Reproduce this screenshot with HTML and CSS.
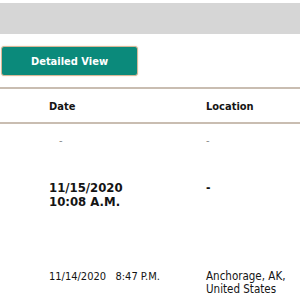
FILE: index.html
```html
<!DOCTYPE html>
<html lang="en">
<head>
    <meta charset="UTF-8">
    <title>Tracking</title>
    <link rel="stylesheet" href="styles.css">
</head>
<body>
<div class="topbar"></div>
<div class="actions">
    <button class="detail-btn">Detailed View</button>
</div>
<table class="history">
    <thead>
    <tr>
        <th class="col-date">Date</th>
        <th class="col-loc">Location</th>
    </tr>
    </thead>
    <tbody>
    <tr class="row-empty">
        <td class="col-date"><span class="dash">-</span></td>
        <td class="col-loc">-</td>
    </tr>
    <tr class="row-latest">
        <td class="col-date">11/15/2020<br>10:08 A.M.</td>
        <td class="col-loc">-</td>
    </tr>
    <tr class="row-event">
        <td class="col-date">11/14/2020&nbsp;&nbsp; 8:47 P.M.</td>
        <td class="col-loc">Anchorage, AK,<br>United States</td>
    </tr>
    </tbody>
</table>
</body>
</html>
```

FILE: styles.css
```css
body {
    margin: 0;
    padding-top: 3px;
    font-family: "DejaVu Sans Condensed", "DejaVu Sans", sans-serif;
    color: #141414;
    background-color: #ffffff;
}

.topbar {
    height: 31px;
    background-color: #d6d6d6;
}

.actions {
    padding: 12px 0 11px 1px;
    border-bottom: 2px solid #c9bdb1;
}

.detail-btn {
    display: block;
    width: 137px;
    height: 30px;
    padding-top: 2px;
    background-color: #0b8a7b;
    border: 1px solid #d8b898;
    border-radius: 3px;
    box-shadow: 0 0 2px #f0dcc8;
    color: #ffffff;
    font-family: "DejaVu Sans Condensed", "DejaVu Sans", sans-serif;
    font-size: 11px;
    font-weight: bold;
}

.history {
    width: 100%;
    border-collapse: collapse;
    table-layout: fixed;
    font-size: 11px;
}

.history th {
    text-align: left;
    font-weight: bold;
    padding-top: 11px;
    padding-bottom: 9px;
    border-bottom: 2px solid #c9bdb1;
}

.history .col-date {
    width: 206px;
    padding-left: 49px;
    box-sizing: border-box;
}

.history .col-loc {
    padding-left: 0;
}

.history td {
    vertical-align: top;
    padding-top: 12px;
    padding-bottom: 0;
    line-height: 14px;
}

.row-empty td {
    color: #8a8a8a;
    height: 30px;
    padding-top: 10px;
}

.dash {
    padding-left: 10px;
}

.row-latest td {
    font-size: 13px;
    font-weight: bold;
    height: 68px;
    padding-top: 17px;
}

.row-latest .col-loc {
    font-size: 12px;
}

.row-event td {
    padding-top: 21px;
    line-height: 13px;
}

.row-event .col-loc {
    font-size: 11.5px;
}
```
